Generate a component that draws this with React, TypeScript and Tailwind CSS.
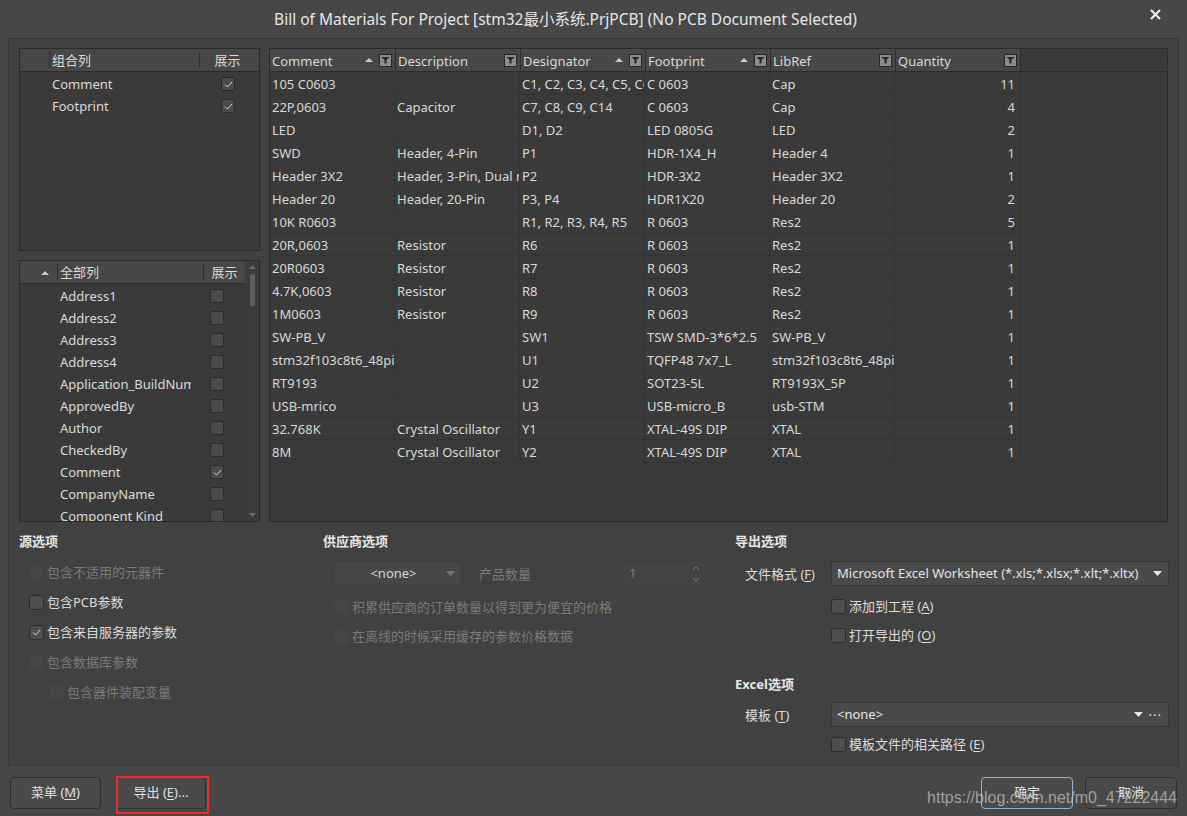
import React from 'react';

const FONT = { fontFamily: '"Noto Sans", "Noto Sans CJK SC", sans-serif' };

const ROWS: string[][] = [
  ['105 C0603', '', 'C1, C2, C3, C4, C5, C6', 'C 0603', 'Cap', '11'],
  ['22P,0603', 'Capacitor', 'C7, C8, C9, C14', 'C 0603', 'Cap', '4'],
  ['LED', '', 'D1, D2', 'LED 0805G', 'LED', '2'],
  ['SWD', 'Header, 4-Pin', 'P1', 'HDR-1X4_H', 'Header 4', '1'],
  ['Header 3X2', 'Header, 3-Pin, Dual row', 'P2', 'HDR-3X2', 'Header 3X2', '1'],
  ['Header 20', 'Header, 20-Pin', 'P3, P4', 'HDR1X20', 'Header 20', '2'],
  ['10K R0603', '', 'R1, R2, R3, R4, R5', 'R 0603', 'Res2', '5'],
  ['20R,0603', 'Resistor', 'R6', 'R 0603', 'Res2', '1'],
  ['20R0603', 'Resistor', 'R7', 'R 0603', 'Res2', '1'],
  ['4.7K,0603', 'Resistor', 'R8', 'R 0603', 'Res2', '1'],
  ['1M0603', 'Resistor', 'R9', 'R 0603', 'Res2', '1'],
  ['SW-PB_V', '', 'SW1', 'TSW SMD-3*6*2.5', 'SW-PB_V', '1'],
  ['stm32f103c8t6_48pin', '', 'U1', 'TQFP48 7x7_L', 'stm32f103c8t6_48pin', '1'],
  ['RT9193', '', 'U2', 'SOT23-5L', 'RT9193X_5P', '1'],
  ['USB-mrico', '', 'U3', 'USB-micro_B', 'usb-STM', '1'],
  ['32.768K', 'Crystal Oscillator', 'Y1', 'XTAL-49S DIP', 'XTAL', '1'],
  ['8M', 'Crystal Oscillator', 'Y2', 'XTAL-49S DIP', 'XTAL', '1'],
];

const COLUMNS = [
  { name: 'Comment', sort: true },
  { name: 'Description', sort: false },
  { name: 'Designator', sort: true },
  { name: 'Footprint', sort: true },
  { name: 'LibRef', sort: false },
  { name: 'Quantity', sort: false },
];

const ALL_COLUMNS: [string, boolean][] = [
  ['Address1', false],
  ['Address2', false],
  ['Address3', false],
  ['Address4', false],
  ['Application_BuildNumber', false],
  ['ApprovedBy', false],
  ['Author', false],
  ['CheckedBy', false],
  ['Comment', true],
  ['CompanyName', false],
  ['Component Kind', false],
];

const Tick = () => (
  <svg width="9" height="7" viewBox="0 0 9 7" fill="none">
    <path d="M1 3.5 L3.5 6 L8 1" stroke="#d8d8d8" strokeWidth="1" />
  </svg>
);

const SmallBox: React.FC<{ checked?: boolean }> = ({ checked }) => (
  <div className="w-[14px] h-[14px] rounded-[2px] border border-[#2b2b2b] bg-[#4b4b4b] flex items-center justify-center">
    {checked && <Tick />}
  </div>
);

const Check: React.FC<{ label: React.ReactNode; checked?: boolean; disabled?: boolean }> = ({ label, checked, disabled }) => (
  <div className="flex items-center gap-[3px] h-[20px]">
    <div
      className={
        'w-[15px] h-[15px] rounded-[3px] border flex items-center justify-center ' +
        (disabled ? 'border-[#434343] bg-[#464646]' : 'border-[#2c2c2c] bg-[#4e4e4e]')
      }
    >
      {checked && <Tick />}
    </div>
    <span className={'text-[13px] pt-[1px] ' + (disabled ? 'text-[#7b7b7b]' : 'text-[#dcdcdc]')}>{label}</span>
  </div>
);

const SortUp = () => (
  <svg width="8" height="5" viewBox="0 0 8 5">
    <path d="M0 5 L4 1 L8 5 Z" fill="#c8c8c8" />
  </svg>
);

const FilterBtn = () => (
  <div className="w-[13px] h-[13px] border border-[#262626] bg-[#8c8c8c] flex items-center justify-center">
    <svg width="9" height="8" viewBox="0 0 9 8">
      <path d="M0.5 1 H8.5 L5.5 4 V7.5 H3.5 V4 Z" fill="#262626" />
    </svg>
  </div>
);

const U: React.FC<{ c: string }> = ({ c }) => <span className="underline underline-offset-2">{c}</span>;

const Dropdown: React.FC<{ text: string; className?: string; dots?: boolean }> = ({ text, className, dots }) => (
  <div
    className={
      'h-[25px] rounded-[3px] border border-[#363636] bg-[#4a4a4a] flex items-center pl-[5px] pr-[6px] text-[13px] text-[#e4e4e4] ' +
      (className || '')
    }
  >
    <span className="flex-1 whitespace-nowrap pt-[1px]">{text}</span>
    <svg width="9" height="5" viewBox="0 0 9 5">
      <path d="M0 0 H9 L4.5 5 Z" fill="#e8e8e8" />
    </svg>
    {dots && <span className="ml-[6px] text-[13px] leading-none tracking-[1px] -mt-[6px]">...</span>}
  </div>
);

export default function App() {
  return (
    <div className="w-[1187px] h-[816px] bg-[#474747] flex flex-col relative overflow-hidden select-none" style={FONT}>
      {/* title bar */}
      <div className="h-[38px] flex items-center justify-center relative shrink-0 pr-[56px] pt-[1px]">
        <span className="text-[15.5px] text-[#e6e6e6]">
          Bill of Materials For Project [stm32最小系统.PrjPCB] (No PCB Document Selected)
        </span>
        <svg className="absolute right-[26px] top-[9px]" width="11" height="11" viewBox="0 0 11 11">
          <path d="M1 1 L10 10 M10 1 L1 10" stroke="#f0f0f0" strokeWidth="2" />
        </svg>
      </div>

      {/* main body */}
      <div className="mx-[8px] h-[728px] border border-[#383838] bg-[#414141] flex flex-col shrink-0">
        <div className="flex gap-[9px] px-[10px] pt-[9px] h-[484px] shrink-0">
          {/* left lists */}
          <div className="w-[241px] flex flex-col gap-[9px]">
            <div className="h-[203px] border border-[#2a2a2a] bg-[#3a3a3a]">
              <div className="h-[23px] bg-[#474747] border-b border-[#2c2c2c] flex items-center text-[13px] text-[#dadada]">
                <div className="w-[30px] h-[16px] border-r border-[#2e2e2e]" />
                <span className="pl-[2px] flex-1 pt-[2px]">组合列</span>
                <div className="w-[1px] h-[16px] bg-[#2e2e2e]" />
                <span className="w-[59px] text-center pt-[2px] pr-[4px]">展示</span>
              </div>
              {['Comment', 'Footprint'].map((n) => (
                <div key={n} className="h-[22px] flex items-center text-[13px] text-[#dadada]">
                  <span className="pl-[32px] flex-1 pt-[3px]">{n}</span>
                  <div className="w-[51px] flex justify-start pl-[13px] pt-[2px]">
                    <SmallBox checked />
                  </div>
                </div>
              ))}
            </div>

            <div className="h-[262px] border border-[#2a2a2a] bg-[#3a3a3a] flex">
              <div className="flex-1 flex flex-col min-w-0">
                <div className="h-[23px] bg-[#474747] border-b border-[#2c2c2c] flex items-center text-[13px] text-[#dadada]">
                  <div className="w-[38px] h-[16px] border-r border-[#2e2e2e] flex items-center justify-end pr-[8px]">
                    <SortUp />
                  </div>
                  <span className="pl-[2px] flex-1 pt-[2px]">全部列</span>
                  <div className="w-[1px] h-[16px] bg-[#2e2e2e]" />
                  <span className="w-[41px] text-center pt-[2px]">展示</span>
                </div>
                <div className="flex-1 overflow-hidden">
                  {ALL_COLUMNS.map(([n, c]) => (
                    <div key={n} className="h-[22px] flex items-center text-[13px] text-[#dadada] pt-[2px]">
                      <span className="pl-[40px] w-[171px] overflow-hidden whitespace-nowrap pt-[1px]">{n}</span>
                      <div className="ml-[19px]">
                        <SmallBox checked={c} />
                      </div>
                    </div>
                  ))}
                </div>
              </div>
              <div className="w-[14px] bg-[#3c3c3c] flex flex-col items-center py-[4px]">
                <svg width="7" height="4" viewBox="0 0 7 4">
                  <path d="M0 4 L3.5 0 L7 4 Z" fill="#6e6e6e" />
                </svg>
                <div className="mt-[5px] w-[5px] h-[32px] rounded-[3px] bg-[#5e5e5e]" />
                <div className="flex-1" />
                <svg width="7" height="4" viewBox="0 0 7 4">
                  <path d="M0 0 L3.5 4 L7 0 Z" fill="#6e6e6e" />
                </svg>
              </div>
            </div>
          </div>

          {/* BOM table */}
          <div className="flex-1 h-[474px] border border-[#2a2a2a] bg-[#3a3a3a] overflow-hidden">
            <div className="flex h-[23px] border-b border-[#2c2c2c]">
              {COLUMNS.map((c, i) => (
                <div
                  key={c.name}
                  className={
                    'w-[125px] bg-[#474747] flex items-center pl-[2px] pr-[3px] text-[13px] text-[#d8d8d8] ' +
                    (i > 0 ? 'border-l border-[#2e2e2e]' : '')
                  }
                >
                  <span className="flex-1 pt-[3px]">{c.name}</span>
                  {c.sort && (
                    <span className="mr-[6px] mb-[2px]">
                      <SortUp />
                    </span>
                  )}
                  <FilterBtn />
                </div>
              ))}
              <div className="w-[1px] bg-[#2e2e2e]" />
            </div>
            {ROWS.map((r, ri) => (
              <div key={ri} className="flex h-[23px]">
                {r.map((v, i) => (
                  <div
                    key={i}
                    className={
                      'w-[125px] h-[23px] border-b border-r border-[#343434] px-[2px] pt-[3px] flex items-center text-[13px] text-[#d8d8d8] overflow-hidden whitespace-nowrap ' +
                      (i === 5 ? 'justify-end pr-[4px]' : '')
                    }
                  >
                    {v}
                  </div>
                ))}
              </div>
            ))}
          </div>
        </div>

        {/* options area */}
        <div className="flex flex-1 pl-[10px] pt-[9px]">
          {/* source options */}
          <div className="w-[304px] flex flex-col">
            <div className="text-[13px] font-bold text-[#e8e8e8] h-[20px] flex items-center">源选项</div>
            <div className="flex flex-col gap-[10px] pl-[10px] mt-[10px]">
              <Check label="包含不适用的元器件" disabled />
              <Check label="包含PCB参数" />
              <Check label="包含来自服务器的参数" checked />
              <Check label="包含数据库参数" disabled />
              <div className="pl-[20px]">
                <Check label="包含器件装配变量" disabled />
              </div>
            </div>
          </div>

          {/* supplier options */}
          <div className="w-[412px] flex flex-col">
            <div className="text-[13px] font-bold text-[#e8e8e8] h-[20px] flex items-center">供应商选项</div>
            <div className="flex items-center mt-[9px] pl-[11px]">
              <div className="w-[127px] h-[25px] rounded-[3px] border border-[#3f3f3f] bg-[#474747] flex items-center text-[13px] text-[#d6d6d6]">
                <span className="flex-1 text-center pl-[6px] pt-[1px]">&lt;none&gt;</span>
                <svg className="mr-[5px]" width="9" height="5" viewBox="0 0 9 5">
                  <path d="M0 0 H9 L4.5 5 Z" fill="#777" />
                </svg>
              </div>
              <span className="ml-[18px] text-[13px] text-[#7b7b7b] w-[143px] pt-[2px]">产品数量</span>
              <div className="w-[83px] h-[25px] rounded-[3px] border border-[#3e3e3e] bg-[#434343] flex items-center text-[13px] text-[#7b7b7b] pl-[6px]">
                <span className="flex-1">1</span>
                <svg className="mr-[4px]" width="8" height="18" viewBox="0 0 8 18">
                  <path d="M1 5 L4 2 L7 5 M1 13 L4 16 L7 13" stroke="#7b7b7b" fill="none" strokeWidth="1" />
                </svg>
              </div>
            </div>
            <div className="flex flex-col gap-[9px] pl-[11px] mt-[11px]">
              <Check label="积累供应商的订单数量以得到更为便宜的价格" disabled />
              <Check label="在离线的时候采用缓存的参数价格数据" disabled />
            </div>
          </div>

          {/* export options */}
          <div className="flex-1 flex flex-col pr-[9px]">
            <div className="text-[13px] font-bold text-[#e8e8e8] h-[20px] flex items-center">导出选项</div>
            <div className="flex items-center mt-[9px]">
              <span className="w-[96px] pl-[10px] text-[13px] text-[#dcdcdc] pt-[2px]">
                文件格式 (<U c="F" />)
              </span>
              <Dropdown text="Microsoft Excel Worksheet (*.xls;*.xlsx;*.xlt;*.xltx)" className="flex-1" />
            </div>
            <div className="flex flex-col gap-[9px] pl-[96px] mt-[10px]">
              <Check label={<>添加到工程 (<U c="A" />)</>} />
              <Check label={<>打开导出的 (<U c="O" />)</>} />
            </div>
            <div className="text-[13px] font-bold text-[#e8e8e8] h-[20px] flex items-center mt-[30px]">Excel选项</div>
            <div className="flex items-center mt-[7px]">
              <span className="w-[96px] pl-[10px] text-[13px] text-[#dcdcdc] pt-[2px]">
                模板 (<U c="T" />)
              </span>
              <Dropdown text="<none>" className="flex-1" dots />
            </div>
            <div className="pl-[96px] mt-[7px]">
              <Check label={<>模板文件的相关路径 (<U c="E" />)</>} />
            </div>
          </div>
        </div>
      </div>

      {/* buttons */}
      <div className="flex items-center px-[10px] h-[50px] pt-[4px] relative">
        <button className="w-[91px] h-[32px] rounded-[4px] border border-[#2e2e2e] bg-[#4a4a4a] text-[13px] text-[#e0e0e0]">
          菜单 (<U c="M" />)
        </button>
        <div className="ml-[15px] relative">
          <button className="w-[90px] h-[32px] rounded-[4px] border border-[#2e2e2e] bg-[#4a4a4a] text-[13px] text-[#e0e0e0]">
            导出 (<U c="E" />)...
          </button>
          <div className="absolute left-[0px] top-[-1px] w-[93px] h-[38px] border-2 border-[#f02a2a]" />
        </div>
        <div className="flex-1" />
        <button className="w-[92px] h-[32px] rounded-[4px] border border-[#8ab4dc] bg-[#4a4a4a] text-[13px] text-[#e0e0e0]">
          确定
        </button>
        <button className="ml-[12px] w-[92px] h-[32px] rounded-[4px] border border-[#2e2e2e] bg-[#4a4a4a] text-[13px] text-[#e0e0e0]">
          取消
        </button>
        <span
          className="absolute right-[10px] top-[24px] text-[16px] text-[#c8c8c8]/70 leading-none"
          style={{ fontFamily: '"Liberation Sans", Arial, sans-serif' }}
        >
          https://blog.csdn.net/m0_47222444
        </span>
      </div>
    </div>
  );
}
